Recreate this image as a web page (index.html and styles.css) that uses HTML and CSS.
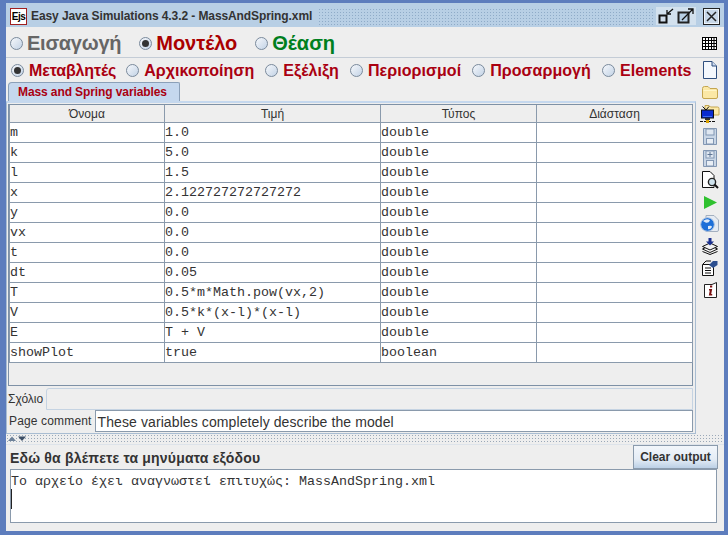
FILE: index.html
```html
<!DOCTYPE html>
<html lang="en">
<head>
    <meta charset="UTF-8">
    <meta name="viewport" content="width=device-width, initial-scale=1.0">
    <title>Easy Java Simulations</title>
    <link rel="stylesheet" href="styles.css">
</head>
<body>
    <div class="window">
        <div class="titlebar">
            <span class="app-logo">Ejs</span>
            <span class="title-text">Easy Java Simulations 4.3.2 - MassAndSpring.xml</span>
            <span class="title-dots"></span>
            <div class="title-buttons">
                <svg class="title-btn" width="20" height="18" viewBox="0 0 20 18"><rect x="0" y="0" width="20" height="18" fill="#d3e1ee"/><rect x="3.5" y="8.5" width="7" height="7" fill="#cfdcea" stroke="#111" stroke-width="2"/><path d="M17 2 L11 7 M11 3 V7 H15" fill="none" stroke="#111" stroke-width="1.3"/></svg>
                <svg class="title-btn" width="20" height="18" viewBox="0 0 20 18"><rect x="0" y="0" width="20" height="18" fill="#d3e1ee"/><rect x="2.5" y="5.5" width="10" height="10" fill="#b8cfe5" stroke="#222" stroke-width="2"/><path d="M6 13 L17 2 M12 2 H17 V7" fill="none" stroke="#111" stroke-width="1.3"/></svg>
                <svg class="title-btn close-btn" width="17" height="17" viewBox="0 0 17 17"><rect x="0.5" y="0.5" width="16" height="16" fill="#c8d8e8" stroke="#222"/><rect x="1.5" y="1.5" width="14" height="14" fill="none" stroke="#eef4fa"/><path d="M4 4 L13 13 M13 4 L4 13" stroke="#222" stroke-width="1.5"/></svg>
            </div>
        </div>

        <div class="mode-row">
            <label class="radio big grey"><span class="dot"></span>Εισαγωγή</label>
            <label class="radio big red"><span class="dot on"></span>Μοντέλο</label>
            <label class="radio big green"><span class="dot"></span>Θέαση</label>
            <svg class="grid-icon" width="15" height="13" viewBox="0 0 15 13"><rect x="0.5" y="0.5" width="14" height="12" fill="#fff" stroke="#000"/><path d="M0 3.5 H15 M0 6.5 H15 M0 9.5 H15 M3.5 1 V12 M6.5 1 V12 M9.5 1 V12 M12 1 V12" stroke="#000"/></svg>
        </div>

        <div class="body-row">
            <div class="main">
                <div class="sub-row">
                    <label class="radio small current"><span class="dot on"></span>Μεταβλητές</label>
                    <label class="radio small"><span class="dot"></span>Αρχικοποίηση</label>
                    <label class="radio small"><span class="dot"></span>Εξέλιξη</label>
                    <label class="radio small"><span class="dot"></span>Περιορισμοί</label>
                    <label class="radio small"><span class="dot"></span>Προσαρμογή</label>
                    <label class="radio small"><span class="dot"></span>Elements</label>
                </div>
                <div class="tab-strip"><span class="tab">Mass and Spring variables</span></div>
                <div class="tab-panel">
                    <div class="table-box">
                        <table class="var-table">
                            <thead>
                                <tr><th class="col-name">Όνομα</th><th class="col-value">Τιμή</th><th class="col-type">Τύπος</th><th>Διάσταση</th></tr>
                            </thead>
                            <tbody>
                                <tr><td>m</td><td>1.0</td><td>double</td><td></td></tr>
                                <tr><td>k</td><td>5.0</td><td>double</td><td></td></tr>
                                <tr><td>l</td><td>1.5</td><td>double</td><td></td></tr>
                                <tr><td>x</td><td>2.122727272727272</td><td>double</td><td></td></tr>
                                <tr><td>y</td><td>0.0</td><td>double</td><td></td></tr>
                                <tr><td>vx</td><td>0.0</td><td>double</td><td></td></tr>
                                <tr><td>t</td><td>0.0</td><td>double</td><td></td></tr>
                                <tr><td>dt</td><td>0.05</td><td>double</td><td></td></tr>
                                <tr><td>T</td><td>0.5*m*Math.pow(vx,2)</td><td>double</td><td></td></tr>
                                <tr><td>V</td><td>0.5*k*(x-l)*(x-l)</td><td>double</td><td></td></tr>
                                <tr><td>E</td><td>T + V</td><td>double</td><td></td></tr>
                                <tr><td>showPlot</td><td>true</td><td>boolean</td><td></td></tr>
                            </tbody>
                        </table>
                    </div>
                    <div class="comment-row">
                        <span class="comment-label">Σχόλιο</span>
                        <span class="comment-empty"></span>
                    </div>
                    <div class="page-comment-row">
                        <span class="page-label">Page comment</span>
                        <span class="page-input">These variables completely describe the model</span>
                    </div>
                </div>
            </div>
            <div class="toolbar">
                <span class="tool"><svg width="14" height="18" viewBox="0 0 14 18"><path d="M0.5 0.5 H9 L13.5 5 V17.5 H0.5 Z" fill="#f4f8fd" stroke="#2f4f7f"/><path d="M9 0.5 V5 H13.5" fill="#cfdcf0" stroke="#2f4f7f"/></svg></span>
                <span class="tool"><svg width="16" height="13" viewBox="0 0 16 13"><path d="M0.5 2.5 Q0.5 0.5 2.5 0.5 H6 L8 2.5 H14 Q15.5 2.5 15.5 4 V11 Q15.5 12.5 14 12.5 H2 Q0.5 12.5 0.5 11 Z" fill="#fbe8a6" stroke="#c4a650"/><path d="M1.5 4.5 H14.5" stroke="#fff6c8"/></svg></span>
                <span class="tool"><svg width="20" height="20" viewBox="0 0 20 20"><path d="M5 1.5 H9 L10.5 3 H17.5 Q19 3 19 4.5 V11 H5 Z" fill="#fbe8a6" stroke="#c4a650"/><path d="M2.5 2.5 L6 6 M9 2.5 L6 6" stroke="#111"/><rect x="1.5" y="6" width="12" height="8" fill="#0a2bd0" stroke="#111"/><path d="M3 12.5 H12" stroke="#3d6bf0"/><rect x="5" y="14" width="5" height="2" fill="#333"/><path d="M0 17.5 H16" stroke="#111" stroke-width="1.2" stroke-dasharray="3 1"/><rect x="6" y="16" width="3" height="3" fill="#d9a200"/></svg></span>
                <span class="tool"><svg width="14" height="17" viewBox="0 0 14 17"><path d="M0.5 0.5 H13.5 V16.5 H0.5 Z" fill="#c9d6e6" stroke="#8297b3"/><rect x="3" y="1" width="8" height="6" fill="#dfe7f1" stroke="#8297b3"/><rect x="3.5" y="10.5" width="7" height="5.5" fill="#e8eef5" stroke="#8297b3"/></svg></span>
                <span class="tool"><svg width="14" height="17" viewBox="0 0 14 17"><path d="M0.5 0.5 H13.5 V16.5 H0.5 Z" fill="#c9d6e6" stroke="#8297b3"/><rect x="3" y="1" width="8" height="7" fill="#dfe7f1" stroke="#8297b3"/><path d="M7 2 V7 M4.5 4.5 H9.5" stroke="#5f7695"/><rect x="3.5" y="10.5" width="7" height="5.5" fill="#e8eef5" stroke="#8297b3"/></svg></span>
                <span class="tool"><svg width="17" height="18" viewBox="0 0 17 18"><path d="M0.5 0.5 H8 L12 4.5 V16.5 H0.5 Z" fill="#fff" stroke="#111"/><circle cx="10" cy="11" r="3.6" fill="#cfe3ee" stroke="#222" stroke-width="1.4"/><path d="M12.5 13.5 L16 17" stroke="#111" stroke-width="2"/></svg></span>
                <span class="tool"><svg width="13" height="13" viewBox="0 0 13 13"><path d="M0 0 L13 6.5 L0 13 Z" fill="#2fc12f"/></svg></span>
                <span class="tool"><svg width="20" height="18" viewBox="0 0 20 18"><path d="M6 0.5 H14 L18.5 5 V15 Q18.5 16.5 17 16.5 H6 Z" fill="#e6ebf2" stroke="#a3afbf"/><circle cx="7.5" cy="9.5" r="6.8" fill="#1d6fd8" stroke="#a9c2e2"/><path d="M3 6 Q7 3 10 5.5 Q8.5 8.5 5.5 7.5 Z M8 11 Q12 10 12 12 Q10 15 8 14 Z" fill="#dfeaf7"/></svg></span>
                <span class="tool"><svg width="16" height="17" viewBox="0 0 16 17"><path d="M0.5 11 L8 7.5 L15.5 11 L8 14.5 Z" fill="#fff" stroke="#111"/><path d="M0.5 8.5 L8 5 L15.5 8.5 L8 12 Z" fill="#f2f2f2" stroke="#111"/><path d="M0.5 13.5 L8 16.5 L15.5 13.5" fill="none" stroke="#111"/><path d="M6.5 0 H9.5 V3.5 H12 L8 7.5 L4 3.5 H6.5 Z" fill="#1a2f8f"/></svg></span>
                <span class="tool"><svg width="16" height="16" viewBox="0 0 16 16"><path d="M0.5 4.5 H11.5 V15.5 H0.5 Z" fill="#fff" stroke="#111"/><path d="M3 8 H9 M3 10.5 H9 M3 13 H9" stroke="#111"/><path d="M7 5 L11 1 H15.5 V5 L11 8 Z" fill="#2c4f8f"/><path d="M1 4 L4 1 H9" fill="none" stroke="#111"/></svg></span>
                <span class="tool"><svg width="13" height="16" viewBox="0 0 13 16"><path d="M0.5 2.5 H8 L12.5 0.5 V15.5 H0.5 Z" fill="#fff" stroke="#222"/><path d="M6 3.5 h2.2 v2 h-2.2 z M5 7 h3.2 l-1 5 h1 v1.5 h-3.4 l1 -5 h-0.8 z" fill="#7a1010"/></svg></span>
            </div>
        </div>

        <div class="splitter">
            <svg width="24" height="8" viewBox="0 0 24 8"><path d="M1 6 L5 1.5 L9 6 Z" fill="#6d8199"/><path d="M11 1.5 H19 L15 6 Z" fill="#3d4f66"/></svg>
        </div>

        <div class="output">
            <div class="output-head">
                <span class="output-title">Εδώ θα βλέπετε τα μηνύματα εξόδου</span>
                <button class="clear-button">Clear output</button>
            </div>
            <div class="output-box">
                <div class="output-line">Το αρχείο έχει αναγνωστεί επιτυχώς: MassAndSpring.xml</div>
                <div class="caret"></div>
            </div>
        </div>
    </div>
</body>
</html>
```

FILE: styles.css
```css
* {
    box-sizing: border-box;
}

html, body {
    margin: 0;
    padding: 0;
}

body {
    width: 728px;
    height: 535px;
    overflow: hidden;
    font-family: 'Liberation Sans', Arial, sans-serif;
    background-color: #6382bf;
}

.window {
    width: 728px;
    height: 535px;
    border-style: solid;
    border-color: #5d7dbd;
    border-width: 3px 4px 4px 6px;
    display: flex;
    flex-direction: column;
    background-color: #eeeeee;
}

.titlebar {
    height: 24px;
    flex: none;
    padding: 2px 4px 0 4px;
    background-color: #b8cfe5;
    display: flex;
    align-items: center;
}

.app-logo {
    width: 17px;
    height: 17px;
    flex: none;
    margin-right: 4px;
    border: 1px solid #a02020;
    background-color: #fff;
    color: #000;
    font-size: 10px;
    font-weight: bold;
    line-height: 15px;
    text-align: center;
    letter-spacing: -0.5px;
}

.title-text {
    font-size: 12px;
    font-weight: bold;
    color: #333333;
    white-space: nowrap;
    letter-spacing: -0.09px;
}

.title-dots {
    flex: 1;
    height: 17px;
    margin: 0 3px 0 6px;
    background-image: radial-gradient(#8fabc8 0.8px, transparent 0.9px);
    background-size: 3px 3px;
}

.title-buttons {
    display: flex;
    align-items: center;
}

.title-btn {
    display: block;
}

.close-btn {
    margin-left: 7px;
}

.mode-row {
    height: 31px;
    flex: none;
    padding: 2px 6px 0 4px;
    display: flex;
    align-items: center;
    gap: 18px;
    border-bottom: 1px solid #c4ccd6;
}

.grid-icon {
    margin-left: auto;
    margin-right: 1px;
    display: block;
}

.radio {
    display: flex;
    align-items: center;
    font-weight: bold;
    white-space: nowrap;
}

.dot {
    width: 13px;
    height: 13px;
    flex: none;
    border-radius: 50%;
    border: 1px solid #7a8a9c;
    background: linear-gradient(135deg, #f6f8fb, #c3d3e6);
    position: relative;
}

.dot.on::after {
    content: "";
    position: absolute;
    left: 2px;
    top: 2px;
    width: 7px;
    height: 7px;
    border-radius: 50%;
    background-color: #333;
}

.big {
    font-size: 20px;
    gap: 4px;
}

.big.grey {
    color: #666666;
    letter-spacing: -0.25px;
}

.big.red {
    color: #aa0000;
}

.big.green {
    color: #007f1e;
}

.small {
    font-size: 16px;
    gap: 5px;
    color: #aa0011;
    letter-spacing: 0.06px;
}

.small.current {
    letter-spacing: -0.14px;
    margin-right: -1px;
}

.body-row {
    height: 376px;
    flex: none;
    display: flex;
}

.main {
    width: 690px;
    flex: none;
    display: flex;
    flex-direction: column;
}

.sub-row {
    height: 23px;
    flex: none;
    padding: 2px 0 0 5px;
    display: flex;
    align-items: center;
    gap: 11px;
}

.tab-strip {
    height: 20px;
    flex: none;
    padding-left: 2px;
    display: flex;
    align-items: flex-end;
}

.tab {
    height: 19px;
    padding: 0 12px 0 9px;
    background-color: #c5d8ee;
    border: 1px solid #8ba0b8;
    border-bottom: none;
    border-radius: 4px 2px 0 0;
    font-size: 12px;
    font-weight: bold;
    line-height: 18px;
    color: #aa0011;
    letter-spacing: -0.1px;
}

.tab-panel {
    flex: 1;
    min-height: 0;
    border-top: 2px solid #c5d8ee;
    border-right: 1px solid #a9bdd2;
    border-bottom: 1px solid #a9bdd2;
    border-left: 1px solid #a9bdd2;
    padding: 1px 0 0 1px;
    display: flex;
    flex-direction: column;
}

.table-box {
    height: 282px;
    width: 685px;
    flex: none;
    margin-bottom: 1px;
    border: 1px solid #7e91a6;
    background-color: #eeeeee;
}

.var-table {
    width: 684px;
    table-layout: fixed;
    border-collapse: collapse;
    background-color: #fff;
}

.var-table th {
    height: 17px;
    padding: 1px 0 0;
    font-size: 12px;
    font-weight: normal;
    color: #333333;
    background-color: #eeeeee;
    border: 1px solid #8a9aac;
    border-top: none;
    text-align: center;
}

.col-name {
    width: 155px;
}

.col-value {
    width: 216px;
}

.col-type {
    width: 156px;
}

.var-table td {
    height: 20px;
    padding: 0;
    font-family: 'Liberation Mono', 'Courier New', monospace;
    font-size: 13.33px;
    color: #333333;
    border: 1px solid #8a9aac;
    white-space: nowrap;
}

.comment-row {
    height: 23px;
    width: 685px;
    flex: none;
    display: flex;
    align-items: center;
    gap: 3px;
}

.comment-label {
    font-size: 12px;
    color: #333333;
}

.comment-empty {
    flex: 1;
    height: 22px;
    border: 1px solid #c5d3e2;
    border-radius: 3px 0 0 0;
}

.page-comment-row {
    height: 22px;
    flex: none;
    display: flex;
    align-items: center;
    gap: 3px;
    padding-left: 1px;
}

.page-label {
    font-size: 12px;
    color: #333333;
    white-space: nowrap;
    letter-spacing: 0.15px;
}

.page-input {
    width: 598px;
    height: 22px;
    padding-left: 2px;
    background-color: #fff;
    border: 1px solid #8a9aac;
    font-size: 14px;
    line-height: 22px;
    color: #333333;
    white-space: nowrap;
    letter-spacing: 0.1px;
}

.toolbar {
    flex: 1;
    padding-top: 1px;
    display: flex;
    flex-direction: column;
    align-items: center;
}

.tool {
    height: 22px;
    flex: none;
    display: flex;
    align-items: center;
    justify-content: center;
}

.tool svg {
    display: block;
}

.splitter {
    height: 10px;
    flex: none;
    padding-left: 1px;
    background-image: radial-gradient(#9aa8b8 0.7px, transparent 0.8px);
    background-size: 3px 3px;
    display: flex;
    align-items: center;
}

.output {
    flex: 1;
    min-height: 0;
    border-top: 1px solid #dde3ea;
    display: flex;
    flex-direction: column;
    padding: 0 6px 8px 4px;
}

.output-head {
    height: 24px;
    flex: none;
    display: flex;
    align-items: center;
    justify-content: space-between;
}

.output-title {
    font-size: 14px;
    font-weight: bold;
    color: #333333;
    letter-spacing: 0.2px;
    padding-top: 2px;
}

.clear-button {
    width: 85px;
    height: 24px;
    padding: 0;
    font-family: 'Liberation Sans', Arial, sans-serif;
    font-size: 12px;
    font-weight: bold;
    color: #333333;
    border: 1px solid #8a9aac;
    background: linear-gradient(#f2f6fb, #e4ecf5 60%, #bcd0e6);
}

.output-box {
    flex: 1;
    margin-right: 1px;
    background-color: #fff;
    border: 1px solid #8a9aac;
    padding: 4px 0 0;
}

.output-line {
    font-family: 'Liberation Mono', 'Courier New', monospace;
    font-size: 13.33px;
    color: #333333;
    white-space: nowrap;
}

.caret {
    width: 1px;
    height: 20px;
    background-color: #222;
}
```
